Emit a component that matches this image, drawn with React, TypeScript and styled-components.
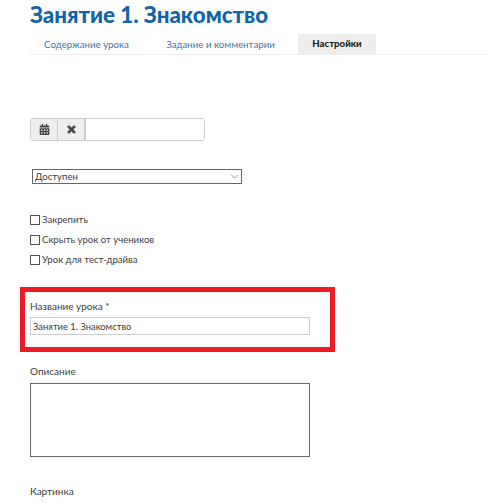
import { createGlobalStyle, styled } from 'styled-components'
import { FaCalendarAlt, FaTimes } from 'react-icons/fa'
import { ChevronDown } from 'lucide-react'

const tabs = ['Содержание урока', 'Задание и комментарии', 'Настройки']
const flags = ['Закрепить', 'Скрыть урок от учеников', 'Урок для тест-драйва']

function App() {
  return (
    <Page>
      <GlobalStyle />
      <Title>Занятие 1. Знакомство</Title>
      <TabBar>
        {tabs.map((tab, i) => (
          <Tab key={tab} $active={i === 2}>
            {tab}
          </Tab>
        ))}
      </TabBar>

      <DateGroup>
        <DateButton>
          <FaCalendarAlt />
        </DateButton>
        <DateButton>
          <BoldCross />
        </DateButton>
        <DateInput />
      </DateGroup>

      <SelectWrap>
        <StatusSelect defaultValue="Доступен">
          <option>Доступен</option>
        </StatusSelect>
        <SelectArrow size={13} strokeWidth={1} />
      </SelectWrap>

      <FlagList>
        {flags.map((flag) => (
          <FlagRow key={flag}>
            <FlagBox type="checkbox" />
            {flag}
          </FlagRow>
        ))}
      </FlagList>

      <Highlight>
        <NameLabel>Название урока *</NameLabel>
        <NameInput defaultValue="Занятие 1. Знакомство" />
      </Highlight>

      <DescriptionLabel>Описание</DescriptionLabel>
      <Description />

      <PictureLabel>Картинка</PictureLabel>
    </Page>
  )
}

export default App

const GlobalStyle = createGlobalStyle`
  html, body {
    margin: 0;
    background: #fff;
    overflow: hidden;
  }
  * {
    box-sizing: border-box;
  }
`

const Page = styled.div`
  width: 487px;
  height: 503px;
  padding-left: 30px;
  overflow: hidden;
  font-family: Lato, 'Open Sans', sans-serif;
  font-size: 10px;
  color: #404040;
`

const Title = styled.h1`
  margin: 0;
  height: 34px;
  font-size: 22.3px;
  line-height: 29px;
  font-weight: 900;
  color: #0f65a5;
`

const TabBar = styled.div`
  display: grid;
  grid-template-columns: 113px 135px 78px;
  column-gap: 10px;
  height: 21px;
  border-bottom: 1px solid #eee;
`

const Tab = styled.div<{ $active?: boolean }>`
  height: 20px;
  line-height: 20px;
  text-align: center;
  font-size: ${({ $active }) => ($active ? '9.6px' : '9.7px')};
  font-weight: ${({ $active }) => ($active ? 900 : 400)};
  color: ${({ $active }) => ($active ? '#222' : '#3f76a5')};
  background: ${({ $active }) => ($active ? '#eee' : 'transparent')};
`

const DateGroup = styled.div`
  display: flex;
  width: 175px;
  height: 23px;
  margin-top: 63px;
  border: 1px solid #ccc;
  border-radius: 3px;
  overflow: hidden;
`

const DateButton = styled.div`
  display: flex;
  align-items: center;
  justify-content: center;
  width: 27px;
  background: #eee;
  border-right: 1px solid #ccc;
  color: #444;
  font-size: 11px;
`

const BoldCross = styled(FaTimes)`
  stroke: currentColor;
  stroke-width: 40px;
`

const DateInput = styled.input`
  flex: 1;
  min-width: 0;
  border: 0;
  border-left: 1px solid #ccc;
  outline: none;
`

const SelectWrap = styled.div`
  position: relative;
  width: 210px;
  height: 15px;
  margin: 28px 0 0 2px;
`

const StatusSelect = styled.select`
  appearance: none;
  display: block;
  width: 100%;
  height: 100%;
  padding: 0 0 0 2px;
  border: 1px solid #666;
  border-radius: 0;
  background: #fff;
  font-family: inherit;
  font-size: 9.6px;
  color: #404040;
`

const SelectArrow = styled(ChevronDown)`
  position: absolute;
  top: 1px;
  right: 1px;
  color: #555;
  pointer-events: none;
`

const FlagList = styled.div`
  display: flex;
  flex-direction: column;
  gap: 5px;
  margin-top: 28px;
`

const FlagRow = styled.label`
  display: flex;
  align-items: center;
  gap: 2px;
  height: 15px;
  font-size: 9.6px;
`

const FlagBox = styled.input`
  appearance: none;
  width: 10px;
  height: 10px;
  margin: 0;
  border: 1px solid #555;
  background: #fff;
`

const Highlight = styled.div`
  width: 315px;
  height: 65px;
  margin: 20px 0 0 -10px;
  padding: 7px 5px 0;
  border: 5px solid #ed1c24;
`

const FieldLabel = styled.div`
  height: 15px;
  line-height: 15px;
  font-size: 10px;
`

const NameLabel = styled(FieldLabel)`
  margin-bottom: 3px;
`

const NameInput = styled.input`
  display: block;
  width: 280px;
  height: 18px;
  padding: 0 2px;
  border: 1px solid #ccc;
  outline: none;
  font-family: inherit;
  font-size: 9.4px;
  color: #404040;
`

const DescriptionLabel = styled(FieldLabel)`
  margin-top: 12px;
`

const Description = styled.textarea`
  display: block;
  width: 280px;
  height: 74px;
  margin-top: 4px;
  border: 1px solid #666;
  outline: none;
  resize: none;
`

const PictureLabel = styled(FieldLabel)`
  margin-top: 27px;
`
